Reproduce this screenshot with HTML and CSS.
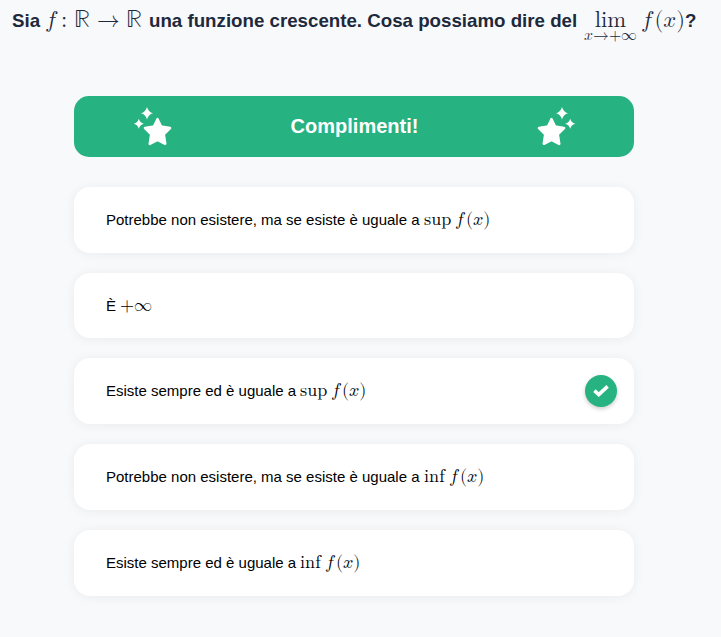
FILE: index.html
```html
<!DOCTYPE html>
<html lang="it">
<head>
<meta charset="utf-8">
<title>Quiz</title>
<link rel="stylesheet" href="styles.css">
</head>
<body>
<h1 class="question"><span class="q-start">Sia</span><span class="math q-domain"><span class="f">𝑓</span><span class="colon">:</span><span class="real">ℝ</span><span class="arrow">→</span><span class="real">ℝ</span></span><span class="q-text">una funzione crescente. Cosa possiamo dire del</span><span class="math q-limit"><span class="limit"><span>lim</span><span class="under"><span class="sub-x">𝑥</span><span class="sub-arrow">→</span><span class="sub-plus">+</span><span class="sub-inf">∞</span></span></span><span class="fx"><span class="f">𝑓</span><span class="paren">(</span><span class="x">𝑥</span><span class="paren">)</span></span></span><span>?</span></h1>
<main class="quiz">
  <div class="banner">
    <svg class="stars" viewBox="0 0 38 40"><path class="star" d="M23.5 12.2 27 19.6 36 21 29.7 27.2 31.2 36.8 23.5 32.8 15.8 36.8 17.3 27.2 11 21 20 19.6Z"/><path d="M13 0Q14.3 5 19 6.3Q14.3 7.6 13 12.4Q11.7 7.6 7 6.3Q11.7 5 13 0ZM4.8 11.7Q5.8 15.7 9.8 16.7Q5.8 17.7 4.8 21.7Q3.8 17.7 -.2 16.7Q3.8 15.7 4.8 11.7Z"/></svg>
    <strong>Complimenti!</strong>
    <svg class="stars flip" viewBox="0 0 38 40"><path class="star" d="M23.5 12.2 27 19.6 36 21 29.7 27.2 31.2 36.8 23.5 32.8 15.8 36.8 17.3 27.2 11 21 20 19.6Z"/><path d="M13 0Q14.3 5 19 6.3Q14.3 7.6 13 12.4Q11.7 7.6 7 6.3Q11.7 5 13 0ZM4.8 11.7Q5.8 15.7 9.8 16.7Q5.8 17.7 4.8 21.7Q3.8 17.7 -.2 16.7Q3.8 15.7 4.8 11.7Z"/></svg>
  </div>
  <div class="card"><span class="long">Potrebbe non esistere, ma se esiste è uguale a</span><span class="math"><span class="op sup">sup</span><span class="fx"><span class="f">𝑓</span><span class="paren">(</span><span class="x">𝑥</span><span class="paren">)</span></span></span></div>
  <div class="card"><span class="single">È</span><span class="math"><span class="plus">+</span><span class="inf">∞</span></span></div>
  <div class="card"><span class="short">Esiste sempre ed è uguale a</span><span class="math"><span class="op sup">sup</span><span class="fx"><span class="f">𝑓</span><span class="paren">(</span><span class="x">𝑥</span><span class="paren">)</span></span></span><span class="check"><svg viewBox="0 0 16 12"><path d="M1.4 5.6 5.8 9.6 14.6 1.4"/></svg></span></div>
  <div class="card"><span class="long">Potrebbe non esistere, ma se esiste è uguale a</span><span class="math"><span class="op infimum">inf</span><span class="fx"><span class="f">𝑓</span><span class="paren">(</span><span class="x">𝑥</span><span class="paren">)</span></span></span></div>
  <div class="card"><span class="short">Esiste sempre ed è uguale a</span><span class="math"><span class="op infimum">inf</span><span class="fx"><span class="f">𝑓</span><span class="paren">(</span><span class="x">𝑥</span><span class="paren">)</span></span></span></div>
</main>
</body>
</html>
```
FILE: styles.css
```css
* { box-sizing: border-box; }
html { background: #f8f9fb; }
body { min-height: 637px; margin: 0; background: #f8f9fb; color: #000; font-family: "Liberation Sans", Arial, sans-serif; }
.question { display: flex; align-items: baseline; height: 96px; margin: 0; padding: 7px 0 0 12px; font-size: 18.72px; line-height: 26px; color: #1e293b; white-space: nowrap; }
.q-start { width: 33px; }
.math { display: inline-flex; align-items: baseline; font-family: "Latin Modern Math", "DejaVu Math TeX Gyre", "Liberation Serif", serif; font-weight: 400; line-height: 26px; }
.math > span, .fx > *, .under > * { display: inline-block; flex: none; }
.q-domain { width: 104px; font-size: 22.6px; }
.q-domain .f { width: 16px; }
.q-domain .colon { width: 13px; }
.q-domain .real { width: 23px; font-size: 25px; }
.q-domain .arrow { width: 29px; }
.q-text { width: 435px; }
.q-limit { width: 101px; font-size: 22.6px; }
.limit { width: 53px; line-height: 26px; text-align: center; }
.limit > span:first-child { display: block; height: 17px; line-height: 26px; }
.under { display: flex; height: 0; font-size: 15.8px; line-height: 23px; }
.under > * { text-align: left; }
.sub-x { width: 9px; }
.sub-arrow { width: 16px; }
.sub-plus { width: 12px; }
.sub-inf { width: 16px; }
.q-limit .fx { margin-left: 4px; }
.fx .f { width: .6em; }
.fx .paren { width: .389em; }
.fx .x { width: .572em; }
.quiz { display: flex; flex-direction: column; gap: 20px; width: 560px; margin-left: 74px; }
.banner { display: flex; align-items: center; justify-content: space-between; height: 61px; margin-bottom: 10px; padding: 0 59px 0 60px; border-radius: 15px; background: #26b281; color: #fff; font-size: 20px; }
.stars { width: 38px; height: 40px; fill: #fff; overflow: visible; }
.stars.flip { transform: scaleX(-1); }
.star { stroke: #fff; stroke-width: 2.6; stroke-linejoin: round; }
.card { display: flex; align-items: center; height: 65.74px; padding: 0 17px 0 32px; border-radius: 16px; background: #fff; box-shadow: 0 1px 12px rgba(0, 0, 0, .06); font-size: 15px; line-height: 26px; white-space: nowrap; }
.card .math { margin-bottom: .2px; font-size: 18.15px; }
.long { width: 318px; }
.short { width: 194px; }
.single { width: 14px; }
.sup { width: 31px; }
.infimum { width: 25px; }
.plus { width: 14px; }
.check { display: flex; align-items: center; justify-content: center; width: 32px; height: 32px; margin-left: auto; border-radius: 50%; background: #26b281; box-shadow: 0 2px 4px rgba(0, 0, 0, .2); }
.check svg { width: 16px; height: 12px; fill: none; stroke: #fff; stroke-width: 3.6; }
```
